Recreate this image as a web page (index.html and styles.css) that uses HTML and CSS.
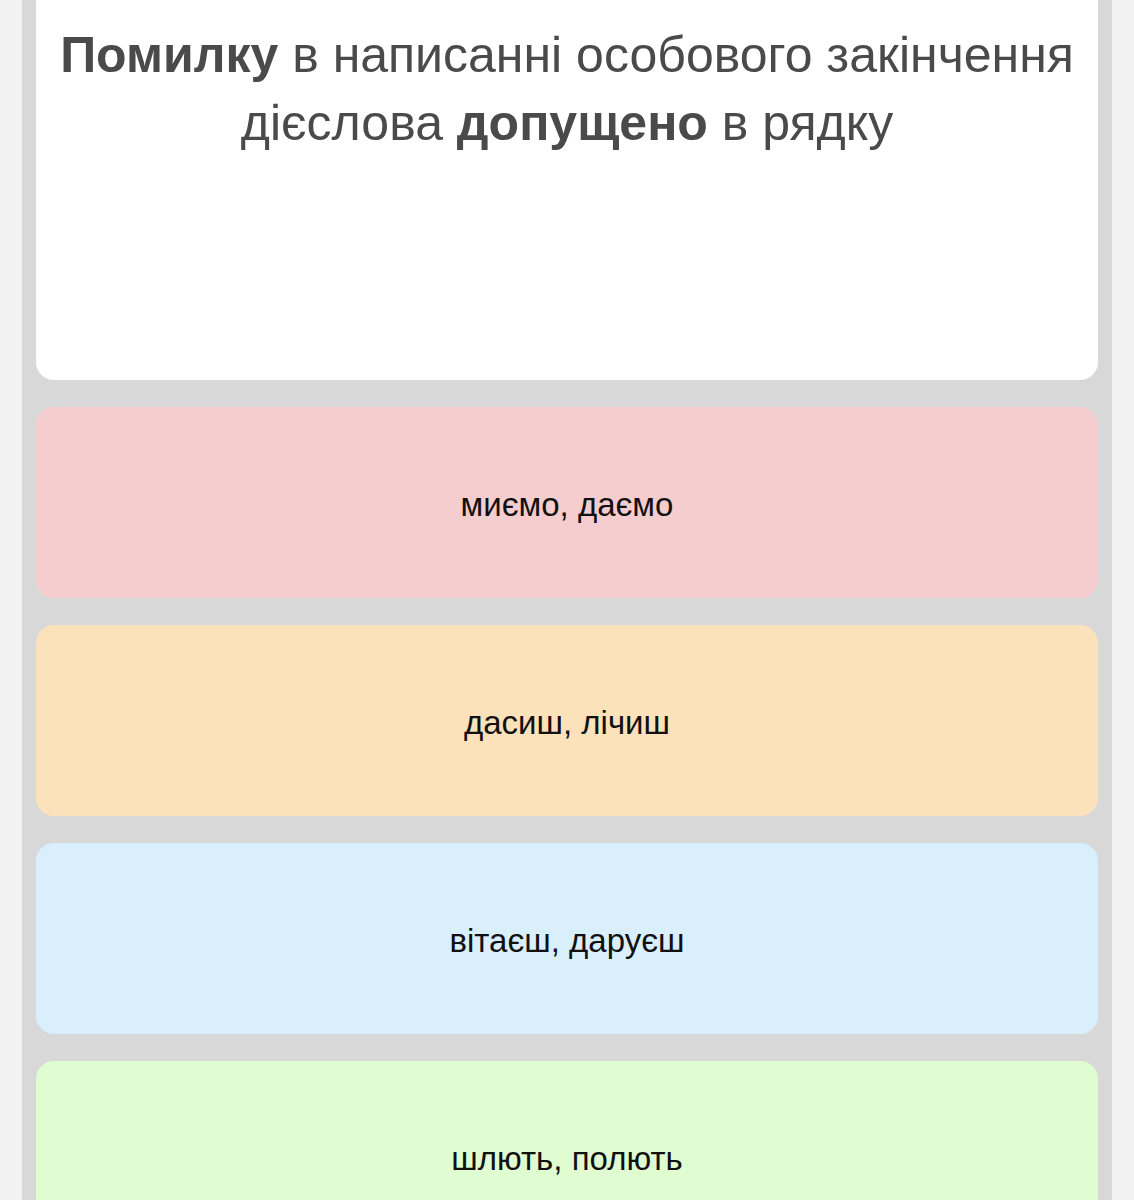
FILE: index.html
```html
<!DOCTYPE html>
<html lang="uk">
<head>
<meta charset="utf-8">
<link rel="stylesheet" href="styles.css">
</head>
<body>
<div class="panel">
  <div class="question">
    <p class="q-text"><b>Помилку</b> в написанні особового закінчення дієслова <b>допущено</b> в рядку</p>
  </div>
  <div class="option red">миємо, даємо</div>
  <div class="option orange">дасиш, лічиш</div>
  <div class="option blue">вітаєш, даруєш</div>
  <div class="option green">шлють, полють</div>
</div>
</body>
</html>
```
FILE: styles.css
```css
html, body {
  margin: 0;
  padding: 0;
  background: #f2f2f2;
  font-family: "Liberation Sans", Arial, sans-serif;
}
.panel {
  margin: 0 22px;
  background: #d8d8d8;
  padding: 0 14px 40px;
  min-height: 1300px;
}
.question {
  background: #ffffff;
  height: 380px;
  border-radius: 0 0 18px 18px;
  padding: 21px 4px 0;
  box-sizing: border-box;
}
.q-text {
  margin: 0;
  text-align: center;
  font-size: 50px;
  line-height: 68px;
  color: #4a4a4a;
}
.q-text b {
  font-weight: 700;
}
.option {
  margin-top: 27px;
  height: 191px;
  box-sizing: border-box;
  padding-top: 5px;
  border-radius: 18px;
  display: flex;
  align-items: center;
  justify-content: center;
  font-size: 33px;
  color: #111;
}
.red { background: #f6cdcf; }
.orange { background: #fce2ba; }
.blue { background: #d9effb; }
.green { background: #e0fdd2; }
```
